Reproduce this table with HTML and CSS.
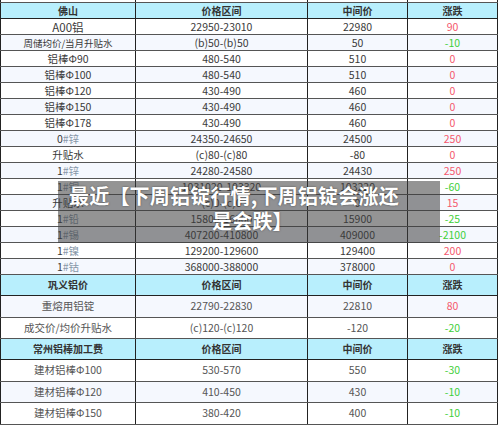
FILE: index.html
```html
<!DOCTYPE html>
<html>
<head>
<meta charset="utf-8">
<link rel="stylesheet" href="styles.css">
</head>
<body>
<div class="wrap">
<table class="price">
<colgroup><col class="c1"><col class="c2"><col class="c3"><col class="c4"></colgroup>
<tr class="stub"><td></td><td></td><td></td><td></td></tr>
<tr class="head"><td>佛山</td><td>价格区间</td><td>中间价</td><td>涨跌</td></tr>
<tr class="r"><td class="big">A00铝</td><td>22950-23010</td><td>22980</td><td class="up">90</td></tr>
<tr class="r alt"><td class="sm">周储均价/当月升贴水</td><td>(b)50-(b)50</td><td>50</td><td class="dn">-10</td></tr>
<tr class="r"><td>铝棒Φ90</td><td>480-540</td><td>510</td><td class="up">0</td></tr>
<tr class="r alt"><td>铝棒Φ100</td><td>480-540</td><td>510</td><td class="up">0</td></tr>
<tr class="r"><td>铝棒Φ120</td><td>430-490</td><td>460</td><td class="up">0</td></tr>
<tr class="r alt"><td>铝棒Φ150</td><td>430-490</td><td>460</td><td class="up">0</td></tr>
<tr class="r"><td>铝棒Φ178</td><td>430-490</td><td>460</td><td class="up">0</td></tr>
<tr class="r alt"><td>0<span class="dim">#锌</span></td><td>24350-24650</td><td>24500</td><td class="up">250</td></tr>
<tr class="r"><td>升贴水</td><td>(c)80-(c)80</td><td>-80</td><td class="up">0</td></tr>
<tr class="r alt"><td>1<span class="dim">#锌</span></td><td>24280-24580</td><td>24430</td><td class="up">250</td></tr>
<tr class="r"><td>1<span class="dim">#铜</span></td><td>1031020-103320</td><td>103220</td><td class="dn">-60</td></tr>
<tr class="r alt"><td>升贴水</td><td>(c)0-(c)0</td><td>0</td><td class="up">15</td></tr>
<tr class="r"><td>1<span class="dim">#铅</span></td><td>15800-16000</td><td>15900</td><td class="dn">-25</td></tr>
<tr class="r alt"><td>1<span class="dim">#锡</span></td><td>407200-410800</td><td>409000</td><td class="dn">-2100</td></tr>
<tr class="r"><td>1<span class="dim">#镍</span></td><td>129200-129600</td><td>129400</td><td class="up">200</td></tr>
<tr class="r alt"><td>1<span class="dim">#钴</span></td><td>368000-388000</td><td>378000</td><td class="up">0</td></tr>
<tr class="head head2"><td>巩义铝价</td><td>价格区间</td><td>中间价</td><td>涨跌</td></tr>
<tr class="r2 alt"><td>重熔用铝锭</td><td>22790-22830</td><td>22810</td><td class="up">80</td></tr>
<tr class="r2"><td>成交价/均价升贴水</td><td>(c)120-(c)120</td><td>-120</td><td class="dn">-20</td></tr>
<tr class="head head2"><td>常州铝棒加工费</td><td>价格区间</td><td>中间价</td><td>涨跌</td></tr>
<tr class="r2"><td>建材铝棒Φ100</td><td>530-570</td><td>550</td><td class="dn">-30</td></tr>
<tr class="r2 alt"><td>建材铝棒Φ120</td><td>410-450</td><td>430</td><td class="dn">-10</td></tr>
<tr class="r2"><td>建材铝棒Φ150</td><td>380-420</td><td>400</td><td class="dn">-10</td></tr>
</table>
<div class="overlay">
<p class="title"><span class="l1">最近【下周铝锭行情,下周铝锭会涨还</span><span class="l2">是会跌】</span></p>
</div>
</div>
</body>
</html>
```
FILE: styles.css
```css
html, body {
  margin: 0;
  padding: 0;
  background: #ffffff;
}
body {
  font-family: "Noto Sans CJK SC", "Noto Sans", sans-serif;
  color: #3a3a3a;
}
.wrap {
  position: relative;
  width: 500px;
  height: 426px;
  overflow: hidden;
}
.price {
  border-collapse: collapse;
  table-layout: fixed;
  width: 497px;
}
.c1 { width: 135px; }
.c2 { width: 172px; }
.c3 { width: 100px; }
.c4 { width: 90px; }
.price td {
  border: 1px solid #555;
  border-left-color: #222;
  border-right-color: #222;
  padding: 0;
  text-align: center;
  white-space: nowrap;
  overflow: hidden;
  font-size: 10.5px;
  line-height: 12px;
}
.stub td {
  height: 2px;
  border-top: none;
  line-height: 0;
}
.head td {
  background: #b8effd;
  font-weight: bold;
  font-size: 10px;
  height: 15px;
  color: #333;
  border-bottom-color: #222;
}
.head2 td {
  height: 20px;
}
.r td {
  height: 15px;
  background: #ffffff;
}
.r.alt td {
  background: #f5f8fe;
}
.r2 td {
  height: 20.5px;
  background: #ffffff;
  font-size: 10.5px;
  color: #555;
}
.r2.alt td {
  background: #f5f8fe;
}
.big { font-size: 11.5px !important; }
.sm { font-size: 9.5px !important; }
.dim { color: #8797a8; }
.up { color: #f4586d !important; }
.dn { color: #3fcf3a !important; }
.overlay {
  position: absolute;
  left: 58px;
  top: 181px;
  width: 382px;
  height: 62px;
  background: rgba(60, 60, 60, 0.55);
}
.title {
  margin: 0;
  padding: 2px 0 0 0;
  color: #ffffff;
  font-weight: bold;
  font-size: 20px;
  line-height: 25px;
  letter-spacing: 0.2px;
  text-shadow: 0 0 2px rgba(0, 0, 0, 0.5);
}
.l1 {
  display: block;
  padding-left: 11px;
  white-space: nowrap;
}
.l2 {
  display: block;
  padding-left: 154px;
}
```
